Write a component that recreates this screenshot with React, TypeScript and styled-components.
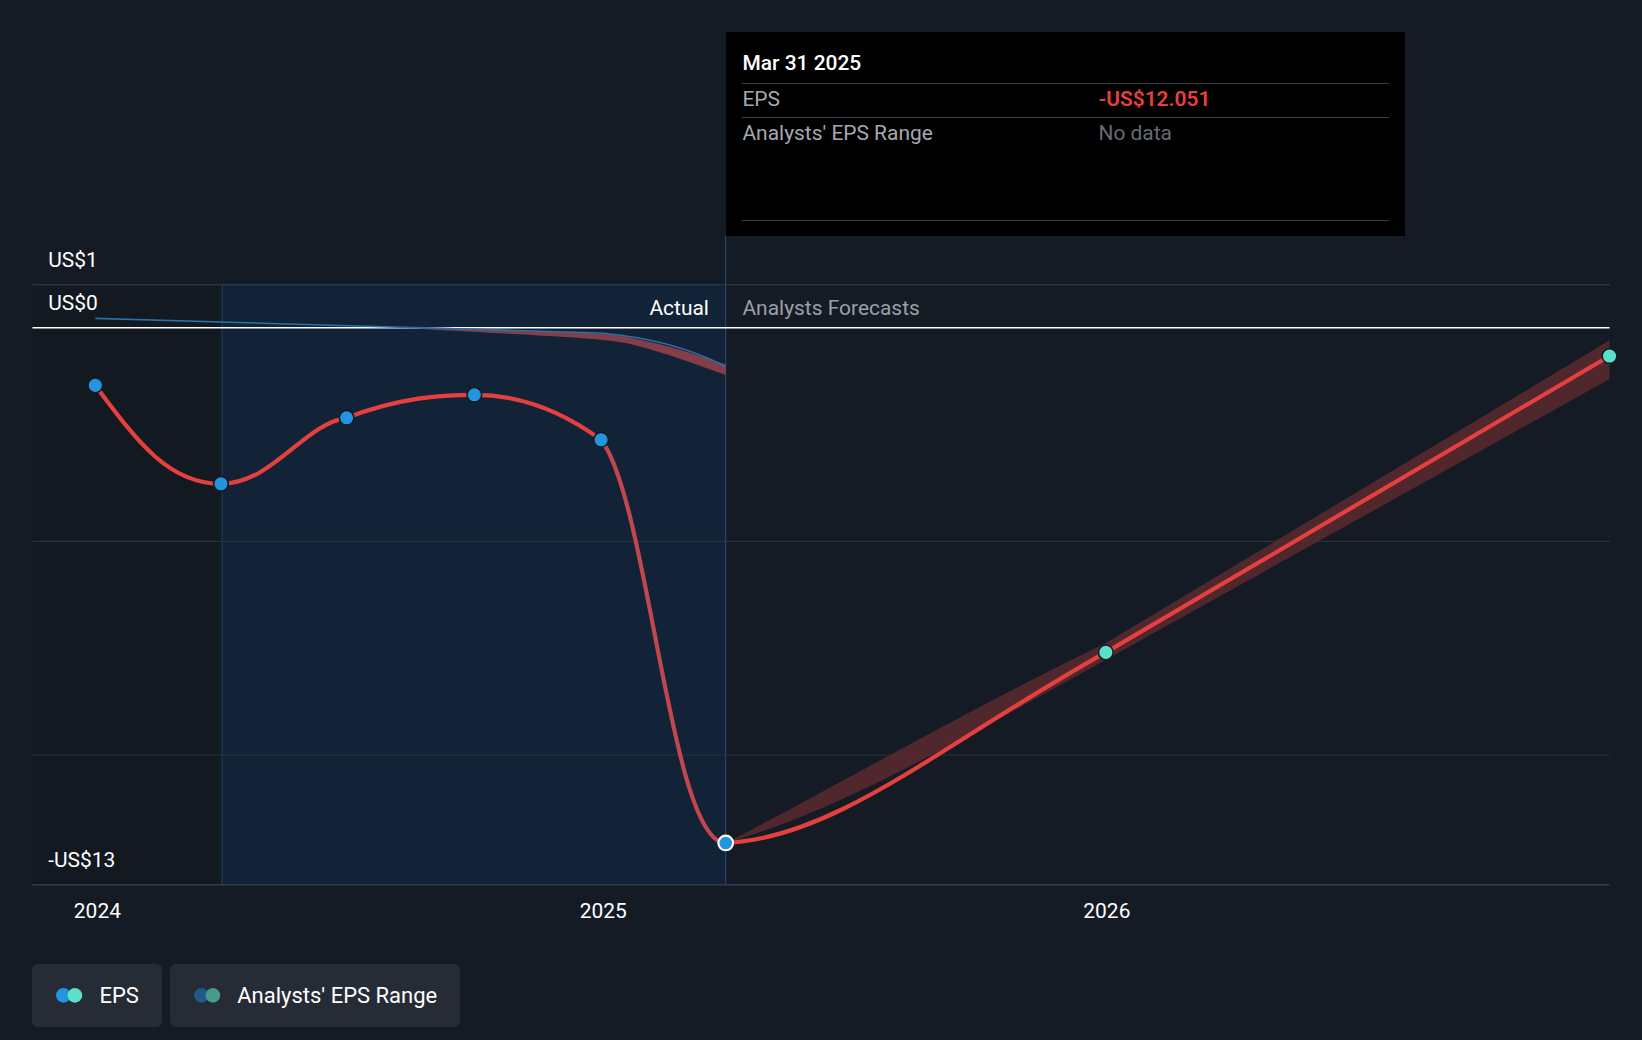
import React from "react";
import styled, { createGlobalStyle } from "styled-components";

const S = 1642 / 1568;

const Global = createGlobalStyle`
  html, body { margin: 0; padding: 0; background: #151b24; }
  body { font-family: Roboto, "Liberation Sans", sans-serif; width: 1642px; height: 1040px; overflow: hidden; }
`;

const Page = styled.div`
  width: 1642px;
  height: 1040px;
  display: flex;
  flex-direction: column;
`;

const ChartWrap = styled.div`
  position: relative;
  width: 1642px;
  height: ${900 * S}px;
`;

const Tooltip = styled.div`
  position: absolute;
  left: ${693 * S}px;
  top: ${31 * S}px;
  width: ${649 * S}px;
  height: ${194 * S}px;
  background: #000;
  box-sizing: border-box;
  padding: ${16 * S}px ${16 * S}px 0 ${16 * S}px;
  color: #fff;
  font-size: ${20 * S}px;
`;

const TipTitle = styled.div`
  font-weight: 500;
  height: ${32 * S}px;
  line-height: ${28 * S}px;
  border-bottom: 1px solid #3a3f47;
`;

const TipRow = styled.div<{ $tall?: boolean }>`
  display: grid;
  grid-template-columns: ${340 * S}px 1fr;
  height: ${p => (p.$tall ? 97 : 32) * S}px;
  line-height: ${30 * S}px;
  border-bottom: 1px solid #3a3f47;
  color: #a4a9b0;
`;

const TipVal = styled.span<{ $c: string; $b?: boolean }>`
  color: ${p => p.$c};
  font-weight: ${p => (p.$b ? 600 : 400)};
`;

const Legend = styled.div`
  display: flex;
  gap: ${8 * S}px;
  padding-left: ${31 * S}px;
  margin-top: ${21 * S}px;
`;

const LegendBtn = styled.div`
  display: flex;
  align-items: center;
  gap: ${12 * S}px;
  height: ${60 * S}px;
  padding: 0 ${22 * S}px;
  background: #262c36;
  border-radius: 6px;
  color: #fff;
  font-size: ${21 * S}px;
`;

const Dots = ({ a, b }: { a: string; b: string }) => (
  <svg width={30 * S} height={16 * S} viewBox="0 0 30 16">
    <circle cx="8" cy="8" r="7" fill={a} />
    <circle cx="19" cy="8" r="7" fill={b} />
  </svg>
);

const Chart = () => (
  <svg width={1642} height={900 * S} viewBox="0 0 1568 900">
    <rect x="31" y="272" width="181" height="573" fill="#131920" />
    <rect x="212" y="272" width="481" height="573" fill="#12253a" opacity="0.9" />
    <line x1="212" y1="272" x2="212" y2="845" stroke="#24405a" />
    <line x1="693" y1="225" x2="693" y2="845" stroke="#2a4d6c" />
    <line x1="31" y1="272" x2="1537" y2="272" stroke="#3a4250" />
    <line x1="31" y1="517" x2="1537" y2="517" stroke="#2b323d" />
    <line x1="31" y1="721" x2="1537" y2="721" stroke="#2b323d" />
    <line x1="31" y1="845" x2="1537" y2="845" stroke="#3a4250" />
    <line x1="31" y1="313" x2="1537" y2="313" stroke="#fff" strokeWidth="1.5" />
    <g fill="#fff" fontSize="20" fontFamily="Roboto, sans-serif">
      <text x="46" y="255">US$1</text>
      <text x="46" y="296">US$0</text>
      <text x="46" y="828">-US$13</text>
      <text x="93" y="877" textAnchor="middle">2024</text>
      <text x="576" y="877" textAnchor="middle">2025</text>
      <text x="1057" y="877" textAnchor="middle">2026</text>
      <text x="677" y="301" textAnchor="end">Actual</text>
      <text x="709" y="301" fill="#9aa0a8">Analysts Forecasts</text>
    </g>
    <path d="M400 312 C500 316 570 316 600 322 C640 330 670 340 693 348 L693 358 C670 350 640 338 600 328 C570 322 500 320 400 314 Z" fill="#a0454f" opacity="0.8" />
    <path d="M91 304 L574 318 C620 322 660 333 693 350" fill="none" stroke="#2a6fa8" strokeWidth="1.5" />
    <path d="M693 805 C800 750 920 680 1056 614 L1537 325 L1537 362 L1056 630 C920 705 800 775 693 805 Z" fill="#5e2a30" opacity="0.8" />
    <path d="M91 368 C130 420 160 462 211 462 C260 462 290 405 331 399 C380 380 420 377 453 377 C500 377 540 395 574 420" fill="none" stroke="#e5403f" strokeWidth="4" />
    <path d="M574 420 C620 480 640 805 693 805" fill="none" stroke="#c0474f" strokeWidth="4" />
    <path d="M693 805 C800 800 900 710 1056 623 L1537 340" fill="none" stroke="#e5403f" strokeWidth="4" />
    {[[91, 368], [211, 462], [331, 399], [453, 377], [574, 420]].map(([x, y]) => (
      <circle key={x} cx={x} cy={y} r="7" fill="#2394df" stroke="#151b24" strokeWidth="1.5" />
    ))}
    <circle cx="693" cy="805" r="7" fill="#2394df" stroke="#fff" strokeWidth="2" />
    <circle cx="1056" cy="623" r="7" fill="#5ce0c8" stroke="#151b24" strokeWidth="1.5" />
    <circle cx="1537" cy="340" r="7" fill="#5ce0c8" stroke="#151b24" strokeWidth="1.5" />
  </svg>
);

export default function App() {
  return (
    <Page>
      <Global />
      <ChartWrap>
        <Chart />
        <Tooltip>
          <TipTitle>Mar 31 2025</TipTitle>
          <TipRow><span>EPS</span><TipVal $c="#e5403f" $b>-US$12.051</TipVal></TipRow>
          <TipRow $tall><span>Analysts' EPS Range</span><TipVal $c="#666b72">No data</TipVal></TipRow>
        </Tooltip>
      </ChartWrap>
      <Legend>
        <LegendBtn><Dots a="#2394df" b="#5ce0c8" />EPS</LegendBtn>
        <LegendBtn><Dots a="#1f5a8a" b="#4a9a8c" />Analysts' EPS Range</LegendBtn>
      </Legend>
    </Page>
  );
}
